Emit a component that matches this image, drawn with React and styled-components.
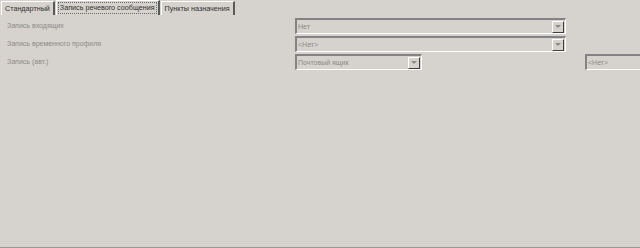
import React from 'react';
import styled, { createGlobalStyle } from 'styled-components';

const Global = createGlobalStyle`
  html, body { margin: 0; padding: 0; background: #d6d3ce; }
  body { font-family: "Liberation Sans", Arial, sans-serif; }
`;

const Page = styled.div`
  width: 640px;
  height: 248px;
  background: #d6d3ce;
  border-bottom: 1px solid #9a9894;
  box-sizing: border-box;
  display: flex;
  flex-direction: column;
  overflow: hidden;
`;

const TabBar = styled.div`
  display: flex;
  height: 15px;
  padding-left: 1px;
  align-items: flex-end;
`;

const Tab = styled.div`
  height: ${p => (p.active ? 15 : 14)}px;
  box-sizing: border-box;
  padding: 0 3px;
  margin-right: 1px;
  font-family: "Liberation Sans", Arial, sans-serif;
  font-size: 7.2px;
  line-height: 13px;
  color: #303030;
  border-top: 1px solid #ffffff;
  border-left: 1px solid #ffffff;
  border-right: 2px solid #5a5a5a;
  white-space: nowrap;
  position: relative;
  ${p => p.active && `
    &::after {
      content: '';
      position: absolute;
      left: 1px; right: 1px; top: 1px; bottom: 1px;
      border: 1px dotted #6a6a6a;
    }
  `}
`;

const Form = styled.div`
  display: grid;
  grid-template-columns: 288px 1fr;
  row-gap: 2px;
  padding: 3px 0 0 7px;
`;

const Label = styled.div`
  font-family: "Liberation Sans", Arial, sans-serif;
  font-size: 7px;
  color: #8c8a86;
  line-height: 16px;
  height: 16px;
`;

const Controls = styled.div`
  display: flex;
  align-items: center;
  height: 16px;
`;

const Combo = styled.div`
  width: ${p => p.w}px;
  height: 16px;
  box-sizing: border-box;
  border-top: 2px solid #848284;
  border-left: 2px solid #848284;
  border-right: 1px solid #ffffff;
  border-bottom: 1px solid #ffffff;
  display: flex;
  align-items: center;
  justify-content: space-between;
  background: #d6d3ce;
`;

const Value = styled.span`
  font-family: "Liberation Sans", Arial, sans-serif;
  font-size: 7px;
  color: #8c8a86;
  padding-left: 1px;
  white-space: nowrap;
`;

const Drop = styled.div`
  width: 12px;
  height: 12px;
  box-sizing: border-box;
  border-top: 1px solid #ffffff;
  border-left: 1px solid #ffffff;
  border-right: 1px solid #404040;
  border-bottom: 1px solid #404040;
  display: flex;
  align-items: center;
  justify-content: center;
  margin-right: 1px;
`;

const Arrow = styled.div`
  width: 0;
  height: 0;
  border-left: 3px solid transparent;
  border-right: 3px solid transparent;
  border-top: 3px solid #8c8a86;
`;

const TextBox = styled(Combo)`
  margin-left: 163px;
  width: 60px;
  border-right: none;
`;

function Select({ w, value }) {
  return (
    <Combo w={w}>
      <Value>{value}</Value>
      <Drop><Arrow /></Drop>
    </Combo>
  );
}

export default function App() {
  return (
    <Page>
      <Global />
      <TabBar>
        <Tab>Стандартный</Tab>
        <Tab active>Запись речевого сообщения</Tab>
        <Tab>Пункты назначения</Tab>
      </TabBar>
      <Form>
        <Label>Запись входящих</Label>
        <Controls><Select w={271} value="Нет" /></Controls>
        <Label>Запись временного профиля</Label>
        <Controls><Select w={271} value="<Нет>" /></Controls>
        <Label>Запись (авт.)</Label>
        <Controls>
          <Select w={127} value="Почтовый ящик" />
          <TextBox><Value>&lt;Нет&gt;</Value></TextBox>
        </Controls>
      </Form>
    </Page>
  );
}
